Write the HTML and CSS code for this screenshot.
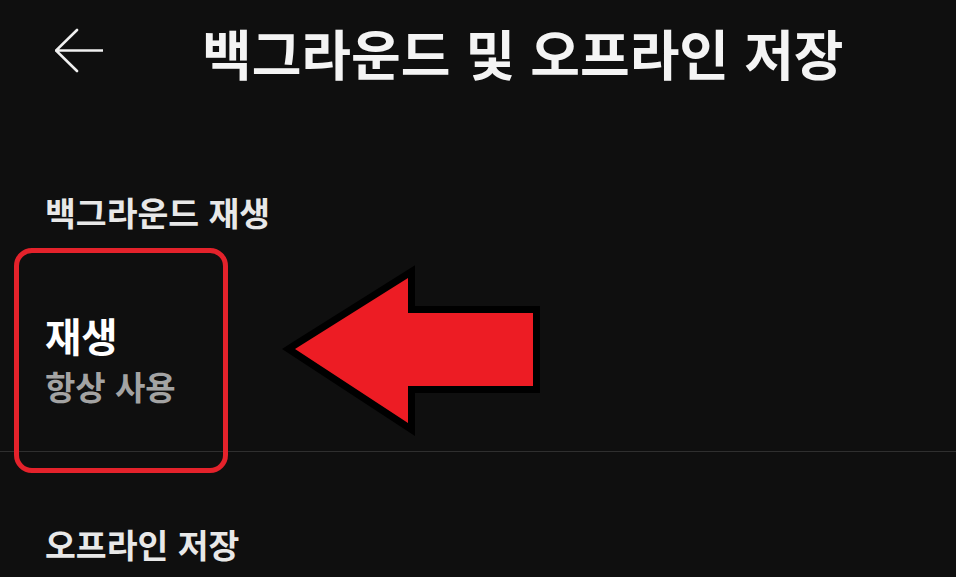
FILE: index.html
```html
<!DOCTYPE html>
<html lang="ko">
<head>
<meta charset="utf-8">
<title>백그라운드 및 오프라인 저장</title>
<link rel="stylesheet" href="styles.css">
</head>
<body>
<div class="screen">
  <header class="header">
    <svg class="back" viewBox="0 0 48 48" width="48" height="48" aria-hidden="true">
      <path d="M22 2 L1 22.5 L22 43 M1 22.5 H48" fill="none" stroke="#f0f0f0" stroke-width="2.6" stroke-linecap="round" stroke-linejoin="miter"/>
    </svg>
    <h1 class="title">백그라운드 및 오프라인 저장</h1>
  </header>

  <h2 class="section-title first">백그라운드 재생</h2>
  <div class="item">
    <div class="item-title">재생</div>
    <div class="item-sub">항상 사용</div>
  </div>
  <div class="divider"></div>
  <h2 class="section-title second">오프라인 저장</h2>

  <div class="highlight-box"></div>
  <svg class="pointer" viewBox="0 0 290 200" width="290" height="200" aria-hidden="true">
    <polygon points="25,99 138,28 138,63 263,63 263,136 138,136 138,173" fill="#ed1c24" stroke="#000" stroke-width="14" stroke-linejoin="miter" paint-order="stroke"/>
  </svg>
</div>
</body>
</html>
```

FILE: styles.css
```css
html, body {
  margin: 0;
  padding: 0;
  background: #0f0f0f;
}
body {
  font-family: "Noto Sans CJK KR", "Noto Sans", sans-serif;
  color: #f2f2f2;
}
.screen {
  position: relative;
  width: 956px;
  height: 577px;
  overflow: hidden;
}
.header {
  display: flex;
  align-items: center;
  height: 105px;
  padding-left: 55px;
}
.back {
  flex: none;
  display: block;
  margin-top: -2px;
}
.title {
  margin: 0 0 0 99px;
  font-size: 54px;
  font-weight: 700;
  line-height: 1;
  color: #f4f4f4;
  white-space: nowrap;
}
.section-title {
  margin: 0;
  padding-left: 45px;
  font-size: 33.5px;
  font-weight: 700;
  line-height: 38px;
  color: #e8e8e8;
}
.section-title.first {
  margin-top: 88px;
}
.item {
  display: flex;
  flex-direction: column;
  padding: 82px 45px 0;
  height: 220px;
  box-sizing: border-box;
}
.item-title {
  font-size: 39.5px;
  font-weight: 700;
  line-height: 44px;
  color: #ffffff;
}
.item-sub {
  font-size: 33px;
  font-weight: 700;
  line-height: 38px;
  margin-top: 10px;
  color: #a3a3a3;
}
.divider {
  height: 1px;
  background: #2f2f2f;
}
.section-title.second {
  margin-top: 73px;
}
.highlight-box {
  position: absolute;
  left: 14px;
  top: 248px;
  width: 214px;
  height: 225px;
  box-sizing: border-box;
  border: 5px solid #e4222b;
  border-radius: 18px;
}
.pointer {
  position: absolute;
  left: 270px;
  top: 250px;
}
```
